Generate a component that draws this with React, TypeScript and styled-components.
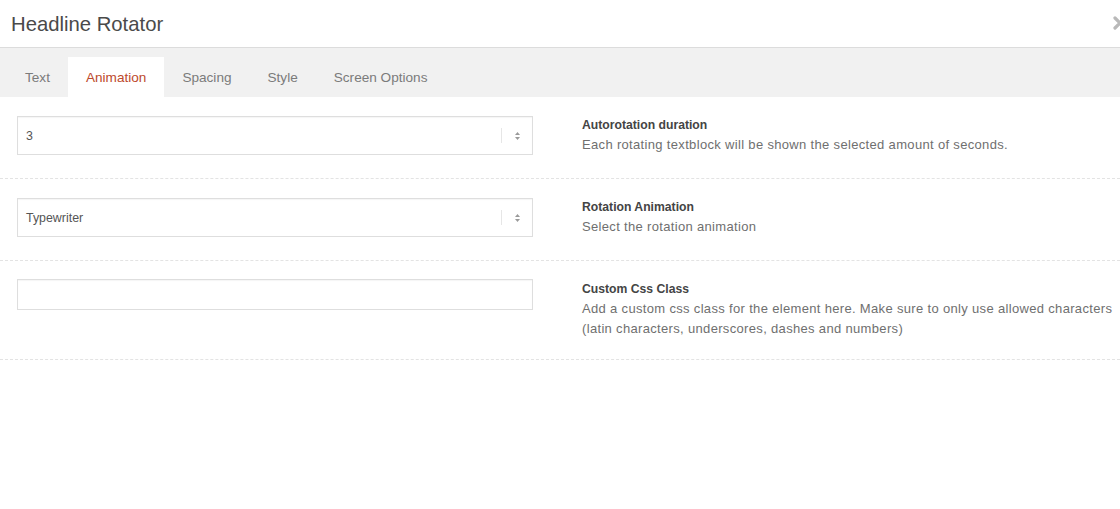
import React from "react"
import styled, { createGlobalStyle } from "styled-components"

const GlobalStyle = createGlobalStyle`
  html, body {
    margin: 0;
    padding: 0;
    background: #ffffff;
  }
  body {
    font-family: "Liberation Sans", Arial, sans-serif;
    -webkit-font-smoothing: antialiased;
  }
  * {
    box-sizing: border-box;
  }
`

const Modal = styled.div`
  width: 1120px;
  height: 509px;
  background: #ffffff;
  overflow: hidden;
`

const Header = styled.header`
  position: relative;
  height: 48px;
  display: flex;
  align-items: center;
  padding: 1px 0 0 11px;
  border-bottom: 1px solid #dcdcdc;
  overflow: hidden;

  h1 {
    margin: 0;
    font-size: 20.3px;
    font-weight: 400;
    color: #4a4a4a;
  }
`

const CloseButton = styled.button`
  position: absolute;
  right: -7px;
  top: 16px;
  width: 14px;
  height: 14px;
  padding: 0;
  border: 0;
  background: none;
  cursor: pointer;
`

const TabBar = styled.nav`
  height: 49px;
  background: #f1f1f1;
  display: flex;
  align-items: flex-end;
  padding-left: 7px;
`

const Tab = styled.div<{ $active?: boolean }>`
  height: 40px;
  padding: 0 18px;
  display: flex;
  align-items: center;
  font-size: 13.6px;
  color: ${(p) => (p.$active ? "#bd4a2c" : "#7b7b7b")};
  background: ${(p) => (p.$active ? "#ffffff" : "transparent")};
`

const Rows = styled.div`
  display: flex;
  flex-direction: column;
`

const Row = styled.section`
  display: grid;
  grid-template-columns: 516px 1fr;
  column-gap: 49px;
  align-items: start;
  padding: 18px 0 20px 17px;
  border-bottom: 1px dashed #e3e3e3;
`

const SelectBox = styled.div`
  position: relative;
  height: 39px;
  margin: 1px 0 3px;
  display: flex;
  align-items: center;
  padding-left: 8px;
  border: 1px solid #dedede;
  box-shadow: inset 0 1px 1px rgba(0, 0, 0, 0.04);
  font-size: 12.4px;
  color: #555555;
  background: #ffffff;
`

const SelectArrows = styled.div`
  margin-left: auto;
  width: 31px;
  height: 15px;
  display: flex;
  align-items: center;
  justify-content: center;
  border-left: 1px solid #e6e6e6;
`

const TextInput = styled.input`
  display: block;
  height: 31px;
  width: 100%;
  margin: 0;
  border: 1px solid #dedede;
  box-shadow: inset 0 1px 1px rgba(0, 0, 0, 0.04);
  font-family: inherit;
  font-size: 13px;
  outline: none;
`

const Info = styled.div`
  font-size: 13px;
  line-height: 20px;

  h4 {
    margin: 0;
    font-size: 12.2px;
    font-weight: 700;
    color: #444444;
  }
  p {
    margin: 0;
    color: #6f6f6f;
    letter-spacing: 0.33px;
  }
`

const Arrows = () => (
  <SelectArrows>
    <svg width="7" height="10" viewBox="0 0 7 10">
      <path d="M3.5 1 L6 4 H1 Z" fill="#9a9a9a" />
      <path d="M3.5 9 L6 6 H1 Z" fill="#9a9a9a" />
    </svg>
  </SelectArrows>
)

type FieldRowProps = {
  title: string
  description: string
  children: React.ReactNode
}

const FieldRow: React.FC<FieldRowProps> = ({ title, description, children }) => (
  <Row>
    <div>{children}</div>
    <Info>
      <h4>{title}</h4>
      <p>{description}</p>
    </Info>
  </Row>
)

const tabs = ["Text", "Animation", "Spacing", "Style", "Screen Options"]

export default function App() {
  return (
    <Modal>
      <GlobalStyle />
      <Header>
        <h1>Headline Rotator</h1>
        <CloseButton aria-label="close">
          <svg width="14" height="14" viewBox="0 0 14 14">
            <path d="M2 2 L12 12 M12 2 L2 12" stroke="#b9b9b9" strokeWidth="3.2" strokeLinecap="round" />
          </svg>
        </CloseButton>
      </Header>
      <TabBar>
        {tabs.map((t) => (
          <Tab key={t} $active={t === "Animation"}>
            {t}
          </Tab>
        ))}
      </TabBar>
      <Rows>
        <FieldRow
          title="Autorotation duration"
          description="Each rotating textblock will be shown the selected amount of seconds."
        >
          <SelectBox>
            3
            <Arrows />
          </SelectBox>
        </FieldRow>
        <FieldRow title="Rotation Animation" description="Select the rotation animation">
          <SelectBox>
            Typewriter
            <Arrows />
          </SelectBox>
        </FieldRow>
        <FieldRow
          title="Custom Css Class"
          description="Add a custom css class for the element here. Make sure to only use allowed characters (latin characters, underscores, dashes and numbers)"
        >
          <TextInput type="text" />
        </FieldRow>
      </Rows>
    </Modal>
  )
}
